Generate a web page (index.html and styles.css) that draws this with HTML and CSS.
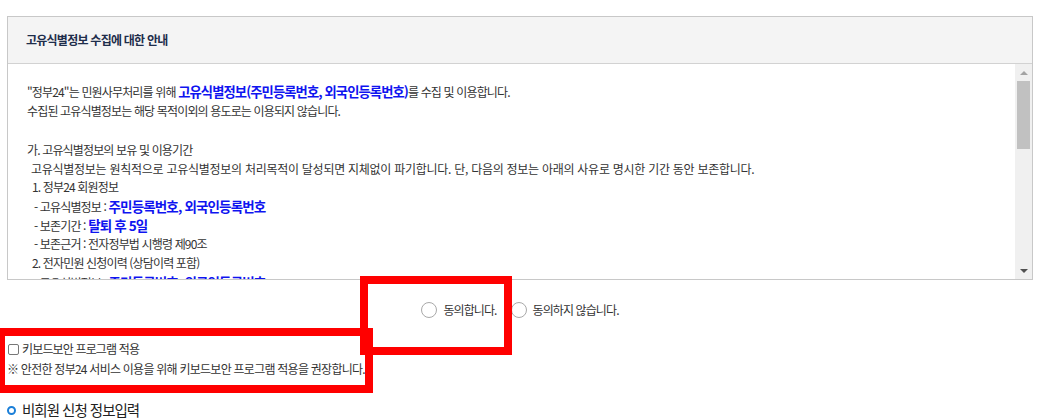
FILE: index.html
```html
<!DOCTYPE html>
<html lang="ko">
<head>
<meta charset="utf-8">
<title>고유식별정보 수집에 대한 안내</title>
<link rel="stylesheet" href="styles.css">
</head>
<body>
<div class="page">
  <section class="agree-box">
    <h3 class="agree-title">고유식별정보 수집에 대한 안내</h3>
    <div class="agree-body">
      <div class="agree-text">
        <p>"정부24"는 민원사무처리를 위해 <b class="em mid">고유식별정보(주민등록번호, 외국인등록번호)</b>를 수집 및 이용합니다.</p>
        <p>수집된 고유식별정보는 해당 목적이외의 용도로는 이용되지 않습니다.</p>
        <p class="blank">&nbsp;</p>
        <p>가. 고유식별정보의 보유 및 이용기간</p>
        <p class="i1">고유식별정보는 원칙적으로 고유식별정보의 처리목적이 달성되면 지체없이 파기합니다. 단, 다음의 정보는 아래의 사유로 명시한 기간 동안 보존합니다.</p>
        <p class="i2">1. 정부24 회원정보</p>
        <p class="i3 tall">- 고유식별정보 : <b class="em big">주민등록번호, 외국인등록번호</b></p>
        <p class="i3 tall">- 보존기간 : <b class="em big">탈퇴 후 5일</b></p>
        <p class="i3">- 보존근거 : 전자정부법 시행령 제90조</p>
        <p class="i2">2. 전자민원 신청이력 (상담이력 포함)</p>
        <p class="i3 tall">- 고유식별정보 : <b class="em big">주민등록번호, 외국인등록번호</b></p>
        <p class="i3 tall">- 보존기간 : <b class="em big">5년</b></p>
      </div>
      <div class="scrollbar">
        <span class="arrow up"></span>
        <span class="thumb"></span>
        <span class="track"></span>
        <span class="arrow down"></span>
      </div>
    </div>
  </section>

  <div class="agree-radios">
    <label class="radio"><span class="circle"></span>동의합니다.</label>
    <label class="radio"><span class="circle"></span>동의하지 않습니다.</label>
  </div>

  <div class="keyboard">
    <label class="check"><span class="box"></span>키보드보안 프로그램 적용</label>
    <p class="note">※ 안전한 정부24 서비스 이용을 위해 키보드보안 프로그램 적용을 권장합니다.</p>
  </div>

  <h4 class="section-title"><span class="ring"></span>비회원 신청 정보입력</h4>

  <div class="mark mark-a"></div>
  <div class="mark mark-b"></div>
</div>
</body>
</html>
```

FILE: styles.css
```css
* { box-sizing: border-box; }
html, body { margin: 0; padding: 0; background: #fff; }
body {
  font-family: "Noto Sans CJK KR", "Noto Sans", sans-serif;
  color: #333;
  overflow: hidden;
}
.page {
  position: relative;
  width: 1058px;
  height: 418px;
  padding: 16px 0 0 7px;
}
.agree-box {
  width: 1026px;
  border: 1px solid #c8c8c8;
}
.agree-title {
  margin: 0;
  height: 47px;
  line-height: 46px;
  padding-left: 18px;
  background: #f4f4f4;
  border-bottom: 1px solid #d2d2d2;
  font-size: 12px;
  font-weight: 700;
  letter-spacing: -0.75px;
  color: #1e2d4b;
}
.agree-body {
  display: flex;
  height: 215px;
}
.agree-text {
  flex: 1;
  overflow: hidden;
  padding: 19px 0 0 19px;
  font-size: 12px;
  letter-spacing: -0.85px;
  line-height: 18.6px;
  color: #333;
}
.agree-text p { margin: 0; white-space: nowrap; }
.agree-text .em { color: #0f14f0; font-weight: 700; }
.agree-text .mid { font-size: 13.3px; letter-spacing: -0.9px; }
.agree-text .big { font-size: 13.5px; }
.agree-text .tall { line-height: 19.2px; }
.agree-text .blank { height: 21px; }
.agree-text .i1 { padding-left: 4px; letter-spacing: -0.27px; }
.agree-text .i2 { padding-left: 5px; }
.agree-text .i3 { padding-left: 7px; }
.scrollbar {
  width: 17px;
  background: #f0f0f0;
  display: flex;
  flex-direction: column;
  align-items: center;
}
.arrow {
  width: 0; height: 0;
  border-left: 4px solid transparent;
  border-right: 4px solid transparent;
}
.arrow.up { border-bottom: 4px solid #a3a3a3; margin: 7px 0 6px; }
.arrow.down { border-top: 4px solid #505050; margin: 6px 0 6px; }
.thumb { width: 13px; height: 68px; background: #c1c1c1; }
.track { flex: 1; }

.agree-radios {
  display: flex;
  justify-content: center;
  gap: 14px;
  width: 1026px;
  padding-top: 21px;
  height: 60px;
  font-size: 12px;
  letter-spacing: -0.9px;
  color: #333;
}
.radio { display: flex; align-items: flex-start; gap: 6px; line-height: 18px; }
.circle {
  width: 16px; height: 16px;
  border: 1px solid #a9a9a9;
  border-radius: 50%;
  background: #fff;
  margin-top: 1px;
}
.keyboard { font-size: 12px; letter-spacing: -0.85px; color: #333; }
.check { display: flex; align-items: center; gap: 3px; line-height: 18px; padding-left: 1px; }
.box {
  width: 11px; height: 11px;
  border: 1px solid #777;
  border-radius: 2px;
  background: #fff;
}
.note { margin: 2px 0 0; line-height: 18px; letter-spacing: -0.75px; }
.section-title {
  margin: 22px 0 0;
  display: flex;
  align-items: center;
  gap: 6px;
  font-size: 14.5px;
  font-weight: 400;
  letter-spacing: -1px;
  color: #222;
  line-height: 20px;
}
.ring {
  width: 9px; height: 9px;
  border: 2.5px solid #1b7fd8;
  border-radius: 50%;
}

.mark {
  position: absolute;
  border: 8px solid #ff0000;
}
.mark-a { left: 360px; top: 276px; width: 152px; height: 79px; }
.mark-b { left: -3px; top: 328px; width: 376px; height: 65px; }
```
